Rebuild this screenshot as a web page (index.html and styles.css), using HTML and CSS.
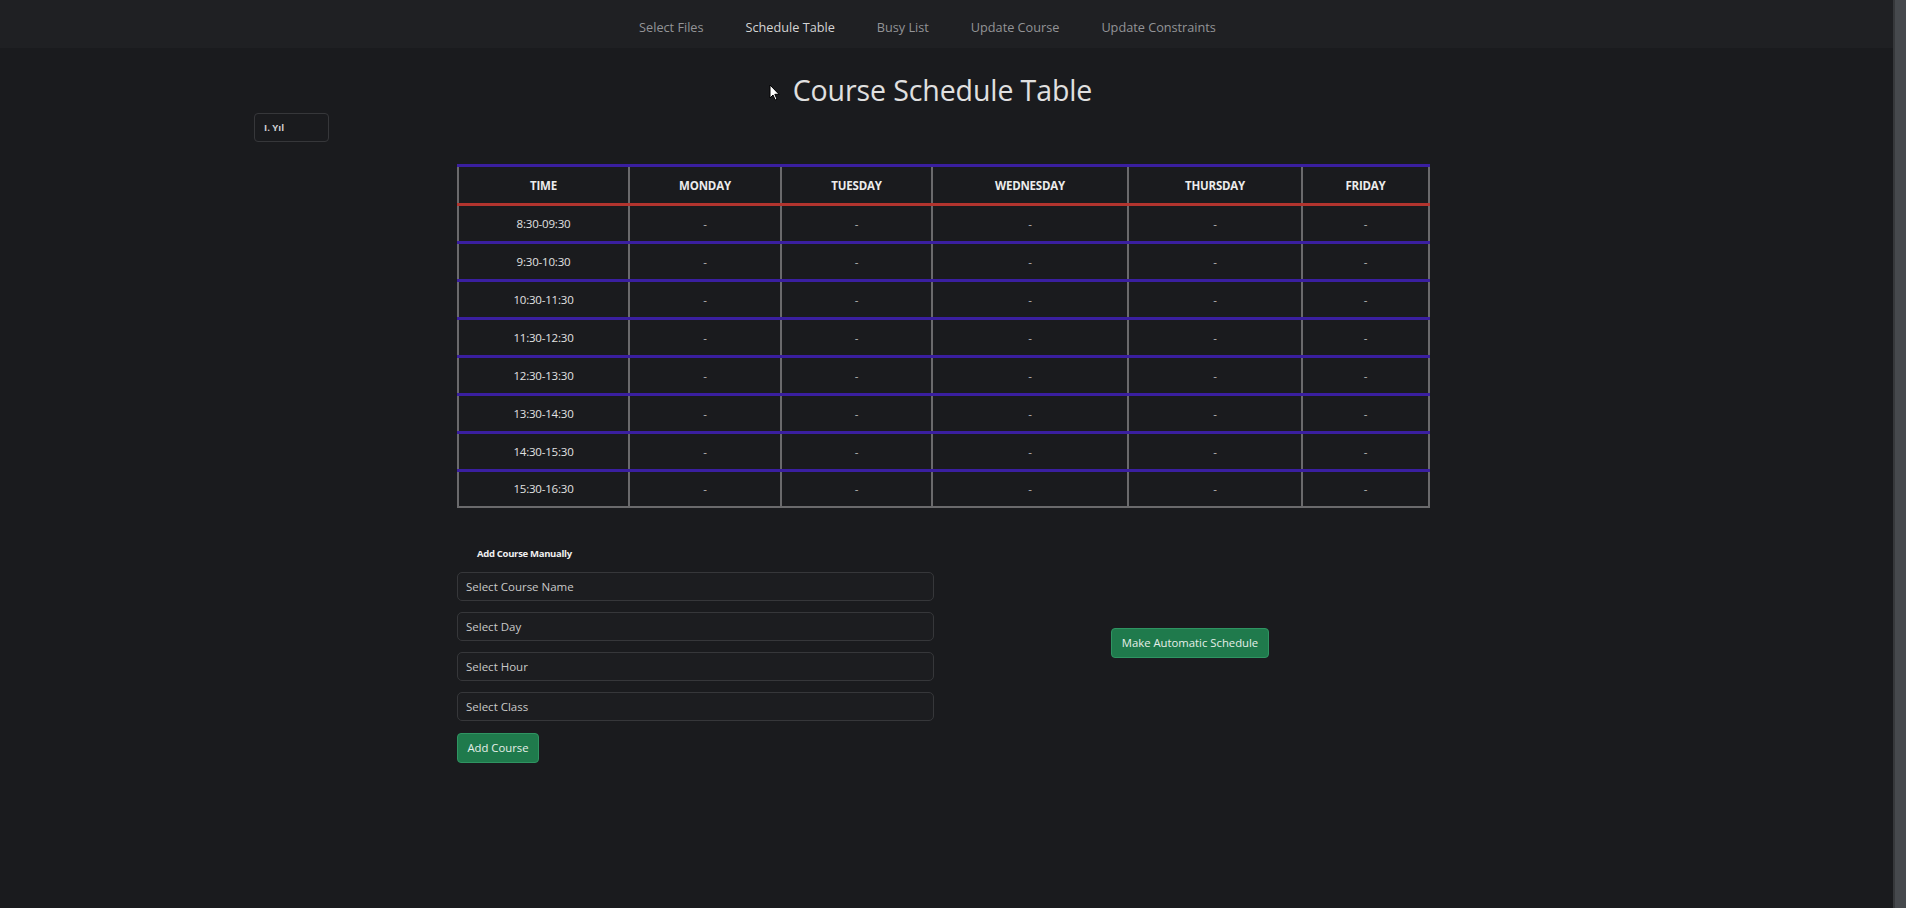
FILE: index.html
```html
<!DOCTYPE html>
<html lang="tr">
<head>
<meta charset="utf-8">
<title>Course Schedule Table</title>
<link rel="stylesheet" href="styles.css">
</head>
<body>
<div class="app">
  <div class="page">
    <nav class="navbar">
      <a class="nav-link">Select Files</a>
      <a class="nav-link active">Schedule Table</a>
      <a class="nav-link">Busy List</a>
      <a class="nav-link">Update Course</a>
      <a class="nav-link">Update Constraints</a>
    </nav>

    <div class="title-row">
      <h1 class="title">
        <svg class="cursor" width="11" height="17" viewBox="0 0 11 17"><path d="M1 1 L1 14 L4 11 L6.2 16 L8 15.2 L5.8 10.3 L10 10.3 Z" fill="#ffffff" stroke="#000000" stroke-width="1"/></svg>
        Course Schedule Table
      </h1>
    </div>

    <div class="year-row">
      <div class="year-select">I. Yıl</div>
    </div>

    <div class="content">
      <table class="schedule">
        <thead>
          <tr>
            <th class="c1">TIME</th>
            <th class="c2">MONDAY</th>
            <th class="c3">TUESDAY</th>
            <th class="c4">WEDNESDAY</th>
            <th class="c5">THURSDAY</th>
            <th class="c6">FRIDAY</th>
          </tr>
        </thead>
        <tbody>
          <tr><td class="time">8:30-09:30</td><td>-</td><td>-</td><td>-</td><td>-</td><td>-</td></tr>
          <tr><td class="time">9:30-10:30</td><td>-</td><td>-</td><td>-</td><td>-</td><td>-</td></tr>
          <tr><td class="time">10:30-11:30</td><td>-</td><td>-</td><td>-</td><td>-</td><td>-</td></tr>
          <tr><td class="time">11:30-12:30</td><td>-</td><td>-</td><td>-</td><td>-</td><td>-</td></tr>
          <tr><td class="time">12:30-13:30</td><td>-</td><td>-</td><td>-</td><td>-</td><td>-</td></tr>
          <tr><td class="time">13:30-14:30</td><td>-</td><td>-</td><td>-</td><td>-</td><td>-</td></tr>
          <tr><td class="time">14:30-15:30</td><td>-</td><td>-</td><td>-</td><td>-</td><td>-</td></tr>
          <tr><td class="time">15:30-16:30</td><td>-</td><td>-</td><td>-</td><td>-</td><td>-</td></tr>
        </tbody>
      </table>

      <div class="bottom">
        <div class="manual">
          <div class="manual-title">Add Course Manually</div>
          <div class="field">Select Course Name</div>
          <div class="field">Select Day</div>
          <div class="field">Select Hour</div>
          <div class="field">Select Class</div>
          <button class="btn btn-add">Add Course</button>
        </div>
        <div class="auto">
          <button class="btn btn-auto">Make Automatic Schedule</button>
        </div>
      </div>
    </div>
  </div>
  <div class="scrollbar"></div>
</div>
</body>
</html>
```

FILE: styles.css
```css
* { box-sizing: border-box; }

html, body {
  margin: 0;
  padding: 0;
  height: 100%;
  overflow: hidden;
  background: #1a1b1e;
  font-family: "Open Sans", "Noto Sans", sans-serif;
  color: #d6d6d6;
}

.app {
  display: flex;
  height: 908px;
}

.page {
  flex: 1;
  display: flex;
  flex-direction: column;
  min-width: 0;
}

.scrollbar {
  width: 13px;
  background: #46494d;
  border-left: 2px solid #36383b;
}

/* navbar */
.navbar {
  height: 48px;
  background: #1f2023;
  display: flex;
  justify-content: center;
  align-items: center;
  gap: 42px;
  padding-right: 38px;
  padding-top: 6px;
}

.nav-link {
  font-size: 12.7px;
  color: #939497;
  text-decoration: none;
  cursor: pointer;
}

.nav-link.active {
  color: #d4d4d4;
}

/* title */
.title-row {
  display: flex;
  justify-content: center;
  padding-right: 8px;
  margin-top: 24px;
}

.title {
  position: relative;
  margin: 0;
  font-size: 28.5px;
  font-weight: 500;
  line-height: 36px;
  color: #e0e0e0;
  letter-spacing: -0.1px;
}

.cursor {
  position: absolute;
  left: -24px;
  top: 12px;
}

/* year select */
.year-row {
  padding-left: 254px;
  margin-top: 5px;
}

.year-select {
  width: 75px;
  height: 29px;
  border: 1px solid #36373a;
  border-radius: 4px;
  font-size: 9.5px;
  font-weight: 700;
  color: #cfcfcf;
  padding-left: 9px;
  line-height: 27px;
}

/* content */
.content {
  width: 971px;
  margin: 22px auto 0;
  position: relative;
  left: -4px;
}

.schedule {
  width: 971px;
  table-layout: fixed;
  border-collapse: collapse;
  font-size: 11.5px;
}

.schedule th,
.schedule td {
  border-left: 2px solid #6a6a6c;
  border-right: 2px solid #6a6a6c;
  text-align: center;
  padding: 0;
}

.schedule th {
  height: 39px;
  font-weight: 700;
  color: #ececec;
  border-top: 3px solid #3a1fa0;
  border-bottom: 3px solid #b2342e;
  letter-spacing: -0.2px;
}

.schedule td {
  height: 38px;
  color: #b9b9b9;
  border-bottom: 3px solid #3a1fa0;
}

.schedule tbody tr:last-child td {
  height: 36px;
  border-bottom: 2px solid #6a6a6c;
}

.schedule td.time {
  color: #e2e2e2;
  letter-spacing: -0.2px;
}

.c1 { width: 171px; }
.c2 { width: 152px; }
.c3 { width: 151px; }
.c4 { width: 196px; }
.c5 { width: 174px; }
.c6 { width: 127px; }

/* bottom */
.bottom {
  display: flex;
  margin-top: 39px;
}

.manual {
  width: 485px;
  display: flex;
  flex-direction: column;
}

.manual-title {
  font-size: 9.5px;
  font-weight: 700;
  color: #f0f0f0;
  line-height: 14px;
  padding-left: 20px;
  margin-bottom: 11px;
  letter-spacing: -0.3px;
}

.field {
  width: 477px;
  height: 29px;
  border: 1px solid #36373a;
  border-radius: 5px;
  background: #1c1d20;
  font-size: 11.5px;
  color: #c9c9c9;
  line-height: 27px;
  padding-left: 8px;
  margin-bottom: 11px;
}

.btn {
  font-family: "Open Sans", "Noto Sans", sans-serif;
  font-size: 11.3px;
  color: #e6efe9;
  background: #1f7a4c;
  border: 1px solid #2f9462;
  border-radius: 4px;
  height: 30px;
  padding: 0 9px;
  cursor: pointer;
}

.btn-add {
  align-self: flex-start;
  width: 82px;
  margin-top: 1px;
}

.auto {
  flex: 1;
  display: flex;
  justify-content: center;
  align-items: center;
  padding-left: 10px;
  padding-bottom: 24px;
}

.btn-auto {
  width: 158px;
}
```
